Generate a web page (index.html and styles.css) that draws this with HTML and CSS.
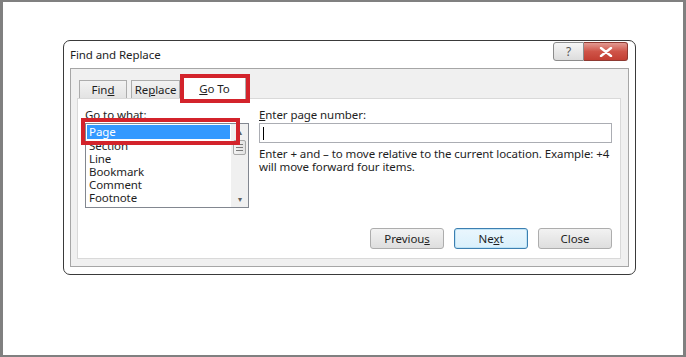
FILE: index.html
```html
<!DOCTYPE html>
<html lang="en">
<head>
  <meta charset="UTF-8">
  <title>Find and Replace - Go To</title>
  <link rel="stylesheet" href="styles.css">
</head>
<body>
  <div class="screen">
    <div class="dialog">
      <div class="titlebar">
        <span class="title">Find and Replace</span>
        <div class="caption">
          <span class="cap help">?</span>
          <span class="cap close">
            <svg width="14" height="10" viewBox="0 0 14 10"><path d="M2 1 L12 9 M12 1 L2 9" stroke="#fff" stroke-width="2.4" stroke-linecap="round"/></svg>
          </span>
        </div>
      </div>
      <div class="client">
        <div class="tabs">
          <span class="tab">Fin<u>d</u></span>
          <span class="tab">Re<u>p</u>lace</span>
          <span class="tab selected"><u>G</u>o To<span class="mark mark-tab"></span></span>
        </div>
        <div class="panel">
          <div class="fields">
            <div class="col-what">
              <div class="label">G<u>o</u> to what:</div>
              <div class="listbox">
                <ul class="items">
                  <li class="sel">Page</li>
                  <li>Section</li>
                  <li>Line</li>
                  <li>Bookmark</li>
                  <li>Comment</li>
                  <li>Footnote</li>
                </ul>
                <div class="scrollbar">
                  <span class="arrow">&#9652;</span>
                  <span class="thumb"><i></i><i></i><i></i></span>
                  <span class="arrow down">&#9662;</span>
                </div>
                <span class="mark mark-page"></span>
              </div>
            </div>
            <div class="col-enter">
              <div class="label"><u>E</u>nter page number:</div>
              <div class="input"><span class="caret"></span></div>
              <p class="hint">Enter + and &ndash; to move relative to the current location. Example: +4 will move forward four items.</p>
            </div>
          </div>
          <div class="actions">
            <span class="btn">Previou<u>s</u></span>
            <span class="btn default">Ne<u>x</u>t</span>
            <span class="btn">Close</span>
          </div>
        </div>
      </div>
    </div>
  </div>
</body>
</html>
```

FILE: styles.css
```css
body {
  margin: 0;
  font-family: 'Noto Sans', 'Open Sans', sans-serif;
  font-size: 11.5px;
  letter-spacing: -0.08px;
  color: #1e1e1e;
}
.screen {
  width: 686px;
  height: 357px;
  box-sizing: border-box;
  border-style: solid;
  border-color: #808080;
  border-width: 2px 3px 2px 3px;
  background: #fff;
  padding: 38px 0 0 60px;
}
.dialog {
  width: 573px;
  height: 235px;
  box-sizing: border-box;
  border: 1px solid #3a3a3a;
  border-radius: 7px;
  background: #fff;
  display: flex;
  flex-direction: column;
}
.titlebar {
  height: 27px;
  display: flex;
  align-items: flex-start;
  justify-content: space-between;
  padding: 0 7px 0 6px;
}
.title {
  margin-top: 6px;
}
.caption {
  display: flex;
  margin-top: 1px;
}
.cap {
  height: 19px;
  display: flex;
  align-items: center;
  justify-content: center;
  box-sizing: border-box;
}
.help {
  width: 31px;
  border: 1px solid #8c8c8c;
  border-radius: 3px 0 0 3px;
  background: linear-gradient(#f6f6f6, #dcdcdc);
  color: #555;
  font-size: 12px;
}
.close {
  width: 44px;
  border: 1px solid #8e3a32;
  border-left: none;
  border-radius: 0 3px 3px 0;
  background: linear-gradient(#e29a92, #cf5448 50%, #c33f33);
}
.client {
  margin-left: 6px;
  width: 559px;
  height: 199px;
  box-sizing: border-box;
  border: 1px solid #a6a6a6;
  background: #f0f0f0;
  padding: 0 7px 0 6px;
  display: flex;
  flex-direction: column;
}
.tabs {
  display: flex;
  align-items: flex-end;
  height: 29px;
  padding-left: 2px;
  gap: 4px;
}
.tab {
  position: relative;
  height: 18px;
  box-sizing: border-box;
  border: 1px solid #acacac;
  border-bottom: none;
  background: linear-gradient(#f2f2f2, #e3e3e3);
  padding: 1px 0 0;
  text-align: center;
}
.tab:nth-child(1) { width: 48px; }
.tab:nth-child(2) { width: 49px; }
.tab.selected {
  width: 63px;
  height: 22px;
  margin-bottom: -1px;
  margin-left: -1px;
  background: #fff;
  padding-top: 3px;
  z-index: 1;
}
.mark {
  position: absolute;
  border: 4px solid #d3232b;
  pointer-events: none;
}
.mark-tab {
  left: -4px;
  top: -4px;
  width: 62px;
  height: 21px;
}
.panel {
  flex: 1;
  margin-bottom: 7px;
  border: 1px solid #d9d9d9;
  background: #fff;
  padding: 9px 8px 9px 7px;
  display: flex;
  flex-direction: column;
}
.fields {
  display: flex;
  gap: 10px;
}
.label {
  line-height: 14px;
  height: 15px;
}
.col-what {
  width: 164px;
}
.listbox {
  position: relative;
  height: 85px;
  box-sizing: border-box;
  border: 1px solid #828790;
  display: flex;
}
.items {
  list-style: none;
  margin: 0;
  padding: 1px;
  flex: 1;
  overflow: hidden;
}
.items li {
  height: 13px;
  line-height: 13px;
  padding-left: 2px;
}
.items li.sel {
  background: #3399ff;
  color: #fff;
  height: 14px;
  line-height: 14px;
}
.scrollbar {
  width: 17px;
  display: flex;
  flex-direction: column;
  align-items: center;
  background: #f0f0f0;
}
.arrow {
  height: 16px;
  font-size: 8px;
  line-height: 16px;
  color: #606060;
}
.arrow.down {
  margin-top: auto;
}
.thumb {
  width: 13px;
  height: 15px;
  box-sizing: border-box;
  border: 1px solid #a8a8a8;
  border-radius: 2px;
  background: linear-gradient(90deg, #f4f4f4, #e2e2e2);
  display: flex;
  flex-direction: column;
  align-items: center;
  justify-content: center;
  gap: 2px;
}
.thumb i {
  width: 7px;
  height: 1px;
  background: #7a7a7a;
}
.mark-page {
  left: -5px;
  top: -6px;
  width: 151px;
  height: 19px;
}
.col-enter {
  flex: 1;
}
.input {
  height: 20px;
  box-sizing: border-box;
  border: 1px solid #abadb3;
  padding: 3px 0 0 3px;
}
.caret {
  display: block;
  width: 1px;
  height: 13px;
  background: #000;
}
.hint {
  margin: 4px 0 0;
  line-height: 13px;
}
.actions {
  margin-top: auto;
  display: flex;
  justify-content: flex-end;
  gap: 10px;
}
.btn {
  width: 74px;
  height: 21px;
  box-sizing: border-box;
  border: 1px solid #adadad;
  border-radius: 3px;
  background: linear-gradient(#f2f2f2, #dedede);
  text-align: center;
  line-height: 19px;
}
.btn.default {
  border-color: #3c7fb1;
  background: linear-gradient(#eaf6fd, #d9f0fc);
  box-shadow: inset 0 0 0 1px #bfe3f5;
}
```
